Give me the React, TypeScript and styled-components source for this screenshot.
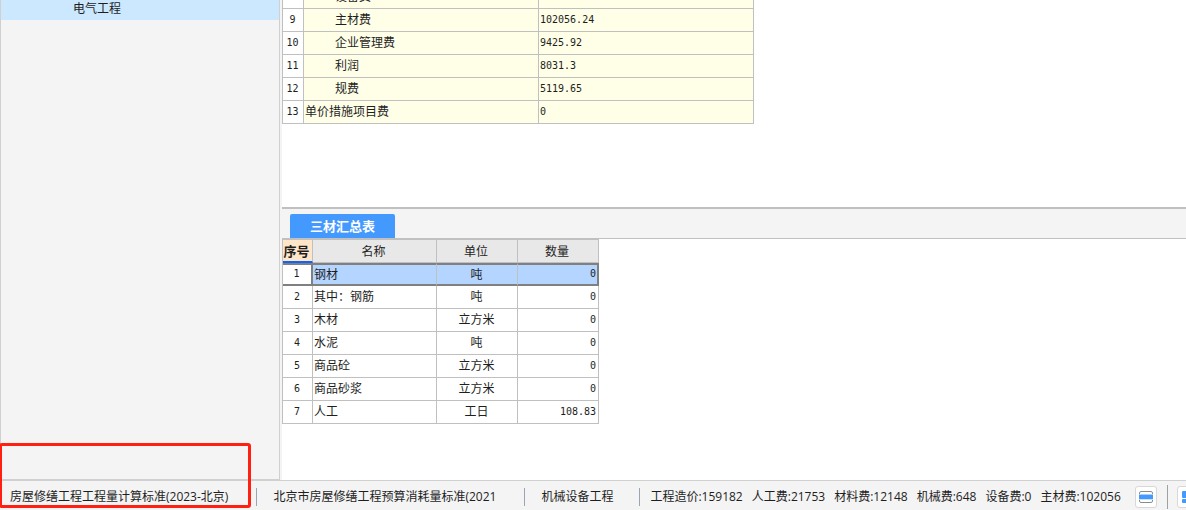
import React from "react";
import styled, { createGlobalStyle, css } from "styled-components";

const GlobalStyle = createGlobalStyle`
  *, *::before, *::after { box-sizing: border-box; }
  body {
    margin: 0;
    background: #f4f4f4;
    color: #1e1e1e;
    font: 12px/16px "Noto Sans CJK SC", sans-serif;
  }
  button { font: inherit; color: inherit; }
`;

const Page = styled.div`
  display: flex;
  flex-direction: column;
  height: 100vh;
  overflow: hidden;
`;

const Workspace = styled.div`
  display: flex;
  flex: 1;
  min-height: 0;
`;

const Sidebar = styled.nav`
  flex: none;
  width: 280px;
  margin-right: 2px;
  border: 1px solid #d0d0d0;
  border-top: 0;
`;

const TreeItem = styled.button`
  display: block;
  width: 100%;
  height: 20px;
  padding: 0 0 4px 72px;
  border: 0;
  background: #cce8ff;
  text-align: left;
  line-height: 16px;
`;

const Main = styled.main`
  display: flex;
  flex: 1;
  flex-direction: column;
  min-width: 0;
  background: #fff;
`;

const CostPanel = styled.section`
  flex: none;
  padding-bottom: 83px;
  border-bottom: 2px solid #c0c0c0;
  overflow: hidden;
`;

const MaterialPanel = styled.section`
  flex: 1;
  min-height: 0;
  overflow: hidden;
`;

const Table = styled.table`
  table-layout: fixed;
  border-collapse: separate;
  border-spacing: 0;
  border-left: 1px solid #c0c0c0;
`;

/* The list is scrolled so that its first row is partly hidden. */
const CostTable = styled(Table)`
  width: 472px;
  margin-top: -14px;
`;

const MaterialTable = styled(Table)`
  width: 317px;
  border-top: 1px solid #c0c0c0;
`;

const Col = styled.col<{ $width: number }>`
  width: ${(p) => p.$width}px;
`;

type Align = "left" | "center" | "right";

const cellBase = css`
  height: 23px;
  border: 0 solid #c0c0c0;
  border-width: 0 1px 1px 0;
  line-height: 16px;
  white-space: nowrap;
`;

const Cell = styled.td<{ $align?: Align; $indent?: boolean; $tint?: boolean; $numeric?: boolean }>`
  ${cellBase}
  padding: 0 2px 2px ${(p) => (p.$indent ? 31 : 1)}px;
  background: ${(p) => (p.$tint ? "#ffffe8" : "#fff")};
  text-align: ${(p) => p.$align ?? "left"};
  ${(p) =>
    p.$numeric &&
    css`
      padding-bottom: 0;
      font-family: "DejaVu Sans Mono", monospace;
      font-size: 10px;
    `}
`;

const IndexCell = styled.th`
  ${cellBase}
  padding: 0 1px 0 0;
  background: #fff;
  font: 10px/16px "DejaVu Sans Mono", monospace;
  text-align: center;
`;

const HeadCell = styled.th<{ $active?: boolean }>`
  ${cellBase}
  padding: 0 2px 0 0;
  background: ${(p) => (p.$active ? "#ffe6c8" : "#e8e8e8")};
  font-weight: ${(p) => (p.$active ? 700 : 400)};
  text-align: center;
  ${(p) => p.$active && css`border-bottom: 2px solid #0a64ff; font-size: 13px;`}
`;

const Row = styled.tr<{ $selected?: boolean }>`
  ${(p) =>
    p.$selected &&
    css`
      ${Cell}, ${IndexCell} {
        border-top: 2px solid #808080;
        border-bottom: 2px solid #808080;
        padding-bottom: 2px;
      }
      ${Cell} { background: #b4d5ff; }
      ${IndexCell} { border-right: 2px solid #808080; }
      ${Cell}:last-child { border-right: 2px solid #808080; padding-right: 1px; }
    `}
`;

const TabBar = styled.div`
  display: flex;
  align-items: flex-end;
  height: 30px;
  padding-left: 8px;
  border-bottom: 1px solid #c0c0c0;
  background: #f4f4f4;
`;

const Tab = styled.button`
  height: 24px;
  padding: 0 20px;
  border: 0;
  border-radius: 2px 2px 0 0;
  background: #4499ff;
  color: #fff;
  font-size: 13px;
  font-weight: 700;
  line-height: 24px;
`;

const StatusBar = styled.footer`
  position: relative;
  display: flex;
  flex: none;
  align-items: center;
  height: 30px;
  padding: 2px 0 0 10px;
  border-top: 1px solid #d0d0d0;
  font-family: "Open Sans", "Noto Sans CJK SC", sans-serif;
  white-space: nowrap;
`;

const StatusItem = styled.span<{ $gap: number }>`
  flex: none;
  padding-right: ${(p) => p.$gap}px;
`;

const Separator = styled.span<{ $tall?: boolean; $gap: number }>`
  flex: none;
  width: 1px;
  height: ${(p) => (p.$tall ? 24 : 18)}px;
  margin-right: ${(p) => p.$gap}px;
  background: ${(p) => (p.$tall ? "#a0a0a0" : "#9aa4b2")};
`;

const Totals = styled.div`
  display: flex;
  flex: none;
  gap: 9px;
  margin-right: 14px;
`;

const IconButton = styled.button`
  display: flex;
  flex: none;
  align-items: center;
  justify-content: center;
  width: 22px;
  height: 22px;
  margin-right: 10px;
  padding: 0;
  border: 1px solid #d8d8d8;
  border-radius: 3px;
  background: #fff;
`;

const Highlight = styled.div`
  position: absolute;
  left: -1px;
  bottom: 2px;
  width: 252px;
  height: 65px;
  border: 3px solid #ff2012;
  border-radius: 3px;
  pointer-events: none;
`;

const costRows = [
  { no: 8, name: "设备费", value: "", indent: true },
  { no: 9, name: "主材费", value: "102056.24", indent: true },
  { no: 10, name: "企业管理费", value: "9425.92", indent: true },
  { no: 11, name: "利润", value: "8031.3", indent: true },
  { no: 12, name: "规费", value: "5119.65", indent: true },
  { no: 13, name: "单价措施项目费", value: "0", indent: false },
];

const materials = [
  { name: "钢材", unit: "吨", amount: "0" },
  { name: "其中：钢筋", unit: "吨", amount: "0" },
  { name: "木材", unit: "立方米", amount: "0" },
  { name: "水泥", unit: "吨", amount: "0" },
  { name: "商品砼", unit: "立方米", amount: "0" },
  { name: "商品砂浆", unit: "立方米", amount: "0" },
  { name: "人工", unit: "工日", amount: "108.83" },
];

const totals = [
  "工程造价:159182",
  "人工费:21753",
  "材料费:12148",
  "机械费:648",
  "设备费:0",
  "主材费:102056",
];

export default function App() {
  return (
    <Page>
      <GlobalStyle />
      <Workspace>
        <Sidebar>
          <TreeItem type="button">电气工程</TreeItem>
        </Sidebar>
        <Main>
          <CostPanel>
            <CostTable>
              <colgroup>
                <Col $width={21} />
                <Col $width={235} />
                <Col $width={215} />
              </colgroup>
              <tbody>
                {costRows.map((r) => (
                  <Row key={r.no}>
                    <IndexCell scope="row">{r.no}</IndexCell>
                    <Cell $tint $indent={r.indent}>{r.name}</Cell>
                    <Cell $tint $numeric>{r.value}</Cell>
                  </Row>
                ))}
              </tbody>
            </CostTable>
          </CostPanel>
          <MaterialPanel>
            <TabBar role="tablist">
              <Tab type="button" role="tab" aria-selected="true">三材汇总表</Tab>
            </TabBar>
            <MaterialTable>
              <colgroup>
                <Col $width={30} />
                <Col $width={124} />
                <Col $width={81} />
                <Col $width={81} />
              </colgroup>
              <thead>
                <tr>
                  <HeadCell scope="col" $active>序号</HeadCell>
                  <HeadCell scope="col">名称</HeadCell>
                  <HeadCell scope="col">单位</HeadCell>
                  <HeadCell scope="col">数量</HeadCell>
                </tr>
              </thead>
              <tbody>
                {materials.map((m, i) => (
                  <Row key={m.name} $selected={i === 0}>
                    <IndexCell scope="row">{i + 1}</IndexCell>
                    <Cell>{m.name}</Cell>
                    <Cell $align="center">{m.unit}</Cell>
                    <Cell $align="right" $numeric>{m.amount}</Cell>
                  </Row>
                ))}
              </tbody>
            </MaterialTable>
          </MaterialPanel>
        </Main>
      </Workspace>
      <StatusBar>
        <StatusItem $gap={28}>房屋修缮工程工程量计算标准(2023-北京)</StatusItem>
        <Separator $gap={16} />
        <StatusItem $gap={28}>北京市房屋修缮工程预算消耗量标准(2021</StatusItem>
        <Separator $gap={16} />
        <StatusItem $gap={26}>机械设备工程</StatusItem>
        <Separator $gap={10} />
        <Totals>
          {totals.map((t) => (
            <span key={t}>{t}</span>
          ))}
        </Totals>
        <IconButton type="button" aria-label="单栏视图">
          <svg width="14" height="12" viewBox="0 0 14 12">
            <rect x="0.5" y="0.5" width="13" height="11" rx="1.5" fill="#fff" stroke="#8c8c8c" />
            <rect x="0" y="3" width="14" height="1" fill="#a8cfff" />
            <rect x="0" y="4" width="14" height="4" fill="#4499ff" />
            <rect x="0" y="8" width="14" height="1" fill="#c8e0ff" />
          </svg>
        </IconButton>
        <Separator $tall $gap={9} />
        <IconButton type="button" aria-label="平铺视图">
          <svg width="12" height="12" viewBox="0 0 12 12" fill="#4499ff">
            <rect width="5" height="7" rx="1" />
            <rect x="7" width="5" height="7" rx="1" />
            <rect y="8" width="5" height="4" rx="1" />
            <rect x="7" y="8" width="5" height="4" rx="1" />
          </svg>
        </IconButton>
        <Highlight />
      </StatusBar>
    </Page>
  );
}
